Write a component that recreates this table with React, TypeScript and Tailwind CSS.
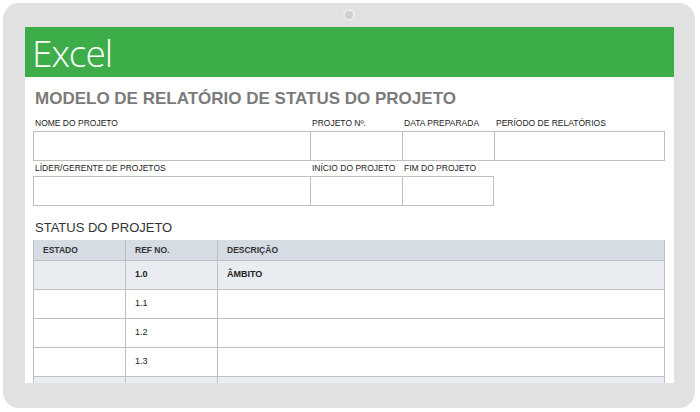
const gothic = "font-['Century_Gothic','URW_Gothic','Liberation_Sans',sans-serif]";

const rows = [
  { ref: "1.0", desc: "ÂMBITO", head: true },
  { ref: "1.1", desc: "" },
  { ref: "1.2", desc: "" },
  { ref: "1.3", desc: "" },
  { ref: "", desc: "", head: true },
];

function Field({ label, w, last }: { label: string; w: string; last?: boolean }) {
  return (
    <div className={`${w} flex flex-col`}>
      <div className="h-[19px] pl-[2px] pt-[7px] text-[8.5px] leading-none text-[#222]">{label}</div>
      <div className={`h-[30px] border-y border-l border-[#bfbfbf] ${last ? "border-r" : ""}`} />
    </div>
  );
}

export default function App() {
  return (
    <div className={`h-[412px] w-[700px] bg-white p-[3px] ${gothic}`}>
      <div className="flex h-[405px] w-[692px] flex-col rounded-[16px] bg-[#e1e1e1] px-[22px]">
        <div className="flex h-[24px] items-center justify-center">
          <div className="h-[8px] w-[8px] rounded-full bg-[#cfcfcf] ring-2 ring-[#ebebeb]" />
        </div>
        <div className="h-[356px] w-[649px] overflow-hidden bg-white">
          <div className="flex h-[50px] items-center bg-[#3dad4a] pl-[7px]">
            <span className="font-['Open_Sans',sans-serif] text-[37px] font-light leading-none tracking-[-1px] text-white">
              Excel
            </span>
          </div>
          <div className="pl-[8px] pr-[9px]">
            <h1 className="mt-[11px] pl-[2px] text-[17px] font-bold leading-[22px] text-[#7b7b7b]">
              MODELO DE RELATÓRIO DE STATUS DO PROJETO
            </h1>
            <div className="mt-[2px] flex">
              <Field label="NOME DO PROJETO" w="w-[277px]" />
              <Field label="PROJETO Nº." w="w-[92px]" />
              <Field label="DATA PREPARADA" w="w-[92px]" />
              <Field label="PERÍODO DE RELATÓRIOS" w="w-[171px]" last />
            </div>
            <div className="-mt-[4px] flex">
              <Field label="LÍDER/GERENTE DE PROJETOS" w="w-[277px]" />
              <Field label="INÍCIO DO PROJETO" w="w-[92px]" />
              <Field label="FIM DO PROJETO" w="w-[92px]" last />
            </div>
            <div className="mt-[14px] pl-[2px] text-[13px] leading-[16px] text-[#333]">STATUS DO PROJETO</div>
            <div className="mt-[4px] w-[632px] border-x border-[#bfbfbf]">
              <div className="flex h-[21px] items-center border-b border-[#bfbfbf] bg-[#d6dce4] text-[8.5px] font-bold text-[#333]">
                <div className="flex h-full w-[92px] items-center border-r border-[#bfbfbf] pl-[9px]">ESTADO</div>
                <div className="flex h-full w-[92px] items-center border-r border-[#bfbfbf] pl-[9px]">REF NO.</div>
                <div className="flex h-full flex-1 items-center pl-[9px]">DESCRIÇÃO</div>
              </div>
              {rows.map((r, i) => (
                <div
                  key={i}
                  className={`flex h-[29px] items-center border-b border-[#bfbfbf] text-[9px] text-[#222] ${r.head ? "bg-[#e9edf2] font-bold" : "bg-white"}`}
                >
                  <div className="h-full w-[92px] border-r border-[#bfbfbf]" />
                  <div className="flex h-full w-[92px] items-center border-r border-[#bfbfbf] pl-[9px]">{r.ref}</div>
                  <div className="flex h-full flex-1 items-center pl-[9px]">{r.desc}</div>
                </div>
              ))}
            </div>
          </div>
        </div>
      </div>
    </div>
  );
}
